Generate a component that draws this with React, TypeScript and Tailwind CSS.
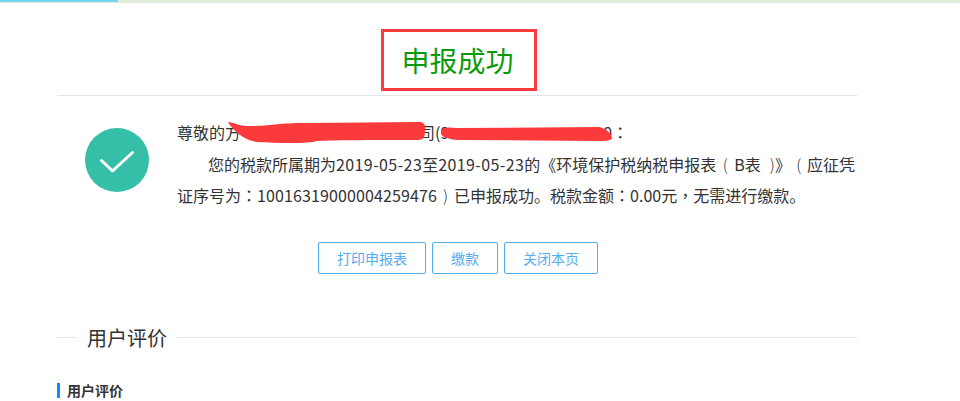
const cjk = "font-['Noto_Sans_CJK_SC','Liberation_Sans',sans-serif]"

const buttons = [
  { label: "打印申报表", width: "w-[108px]" },
  { label: "缴款", width: "w-[66px]" },
  { label: "关闭本页", width: "w-[94px]" },
]

// full-width punctuation sits centred in the reference font
function Punct({ children }: { children: string }) {
  return <span className="font-['Noto_Sans_CJK_TC',sans-serif]">{children}</span>
}

// thin parens, narrower than the CJK ones
function Paren({ children, width }: { children: string; width: string }) {
  return <span className={`inline-block font-light ${width}`}>{children}</span>
}

function Date2019() {
  return <span className="tracking-[0.4px]">2019-05-23</span>
}

export default function App() {
  return (
    <div className={`h-[401px] w-[960px] overflow-hidden bg-white text-[#333] ${cjk}`}>
      {/* top strip */}
      <div className="h-[3px] bg-[#e3ecd8]">
        <div className="h-[2px] w-[118px] bg-[#6fd6f5]" />
      </div>

      <div className="ml-[57px] w-[800px]">
        <div className="flex h-[93px] justify-center border-b border-[#e4e4e4] pt-[26px]">
          <div className="ml-[4px] flex h-[62px] w-[156px] items-center justify-center border-[3px] border-[#fb3b3b]">
            <h1 className="mr-[3px] text-[28px] leading-none font-normal text-[#0a9a0a]">申报成功</h1>
          </div>
        </div>

        <div className="flex pt-[21px]">
          <div className="mt-[11px] ml-[28px] flex h-[64px] w-[64px] shrink-0 items-center justify-center rounded-full bg-[#35bfa8]">
            <svg width="40" height="30" viewBox="0 0 40 30" fill="none">
              <path d="M4.5 15.5 L15.5 26 L35.5 7.5" stroke="#fff" strokeWidth="3" strokeLinecap="round" strokeLinejoin="round" />
            </svg>
          </div>

          <div className="relative ml-[28px] text-[16px] leading-[31.5px] text-[#333]">
            <p className="whitespace-nowrap">
              尊敬的方<span className="ml-[178px]">司(9</span>
              <span className="ml-[154px]">0</span>
              <Punct>：</Punct>
            </p>
            <p className="whitespace-nowrap pl-[31px]">
              您的税款所属期为<Date2019 />至<Date2019 />的《环境保护税纳税申报表
              <Paren width="w-[18px] text-center">(</Paren>
              B表
              <Paren width="w-[14px] text-right">)</Paren>
              》
              <Paren width="w-[16px] text-center">(</Paren>应征凭
            </p>
            <p className="whitespace-nowrap">
              证序号为<Punct>：</Punct>
              <span className="tracking-[0.12px]">10016319000004259476</span>
              <Paren width="w-[17px] text-center">)</Paren>已申报成功。税款金额<Punct>：</Punct>0.00元<Punct>，</Punct>无需进行缴款。
            </p>

            {/* redaction scribble */}
            <svg className="absolute top-0 left-[50px]" width="400" height="30" viewBox="0 0 400 30" fill="none">
              <path
                d="M1 5 C6 5 12 9 20 9 C50 9 46 6 80 6 L192 5 C198 5 199 9 198 15 C198 21 195 23 190 23 C150 23 110 23 90 24 C80 27 50 26 30 25 C22 24 16 20 13 18 C8 14 3 9 1 5 Z"
                fill="#fb3b3b"
              />
              <path
                d="M214 13 C216 10 222 10 230 11 L372 10 C380 11 385 18 385 21 C384 24 378 24 370 24 L235 23 C225 23 216 21 214 17 Z"
                fill="#fb3b3b"
              />
            </svg>
          </div>
        </div>

        <div className="mt-[30px] ml-[261px] flex gap-[6px]">
          {buttons.map((b) => (
            <button
              key={b.label}
              className={`h-[32px] ${b.width} rounded-[2px] border border-[#54acf3] pt-[2px] text-[14px] text-[#54acf3]`}
            >
              {b.label}
            </button>
          ))}
        </div>

        <div className="mt-[49px] flex items-center">
          <div className="h-px w-[20px] bg-[#e4e4e4]" />
          <h2 className="px-[10px] text-[20px] leading-[30px] font-normal text-[#333]">用户评价</h2>
          <div className="h-px flex-1 bg-[#e4e4e4]" />
        </div>

        <div className="mt-[30px] border-l-[3px] border-[#0f8bff] pl-[7px] text-[14px] leading-[15px] font-bold text-[#333]">
          用户评价
        </div>
      </div>
    </div>
  )
}
